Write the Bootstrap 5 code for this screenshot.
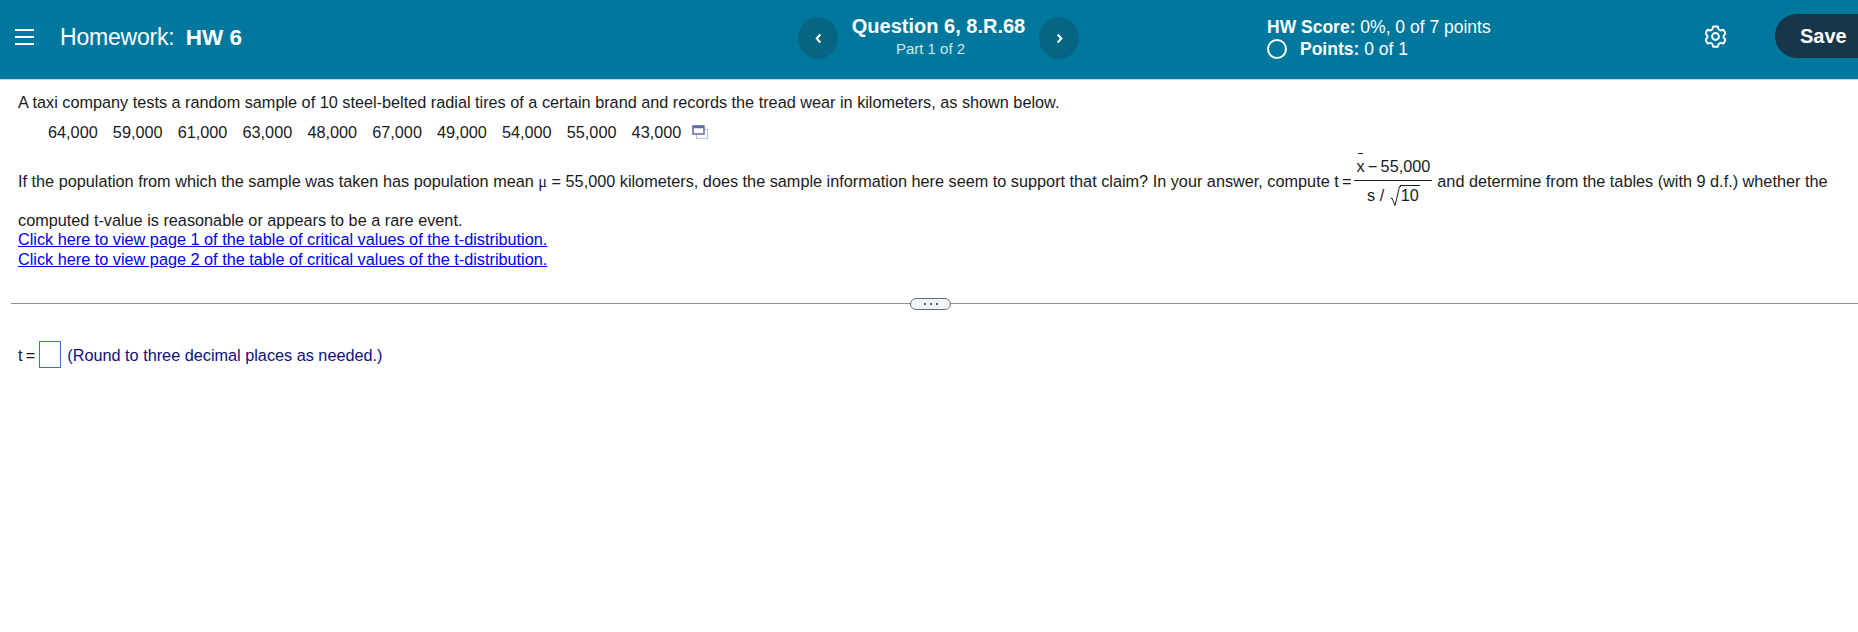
<!DOCTYPE html>
<html lang="en">
<head>
    <meta charset="UTF-8">
    <meta name="viewport" content="width=device-width, initial-scale=1.0">
    <title>Homework: HW 6</title>
    <link href="https://cdn.jsdelivr.net/npm/bootstrap@5.3.0/dist/css/bootstrap.min.css" rel="stylesheet">
    <style>
        body {
            font-family: "Liberation Sans", Arial, sans-serif;
            font-size: 16.25px;
            line-height: 20px;
            color: #1a1a1a;
            background: #fff;
            overflow: hidden;
        }
        .hw-top {
            height: 80px;
            background: #00789e;
            border-bottom: 1px solid #c3d9e6;
            color: #fff;
            white-space: nowrap;
        }
        .hw-left { width: 798px; padding-left: 15px; padding-bottom: 5px; }
        .hw-title { font-size: 23px; margin-left: 26px; letter-spacing: -.2px; }
        .hw-title b { margin-left: 5px; letter-spacing: 0; font-size: 22.5px; }
        .hw-arrow {
            width: 40px;
            height: 42px;
            border: 0;
            padding: 0;
            border-radius: 50%;
            background: #076584;
            margin-bottom: 3px;
        }
        .hw-mid { width: 201px; text-align: center; padding-bottom: 5px; }
        .hw-mid-title { font-size: 20px; font-weight: 700; line-height: 23px; }
        .hw-mid-part { font-size: 15px; line-height: 21px; color: #d5e6ec; padding-right: 16px; }
        .hw-score { width: 438px; margin-left: 188px; padding-bottom: 3px; font-size: 17.5px; line-height: 22px; }
        .hw-ring {
            width: 20px;
            height: 20px;
            border: 2px solid #fff;
            border-radius: 50%;
            margin-right: 13px;
        }
        .hw-gear { width: 70px; margin-bottom: 7px; }
        .hw-save {
            width: 83px;
            height: 44px;
            margin-left: auto;
            margin-bottom: 7px;
            border: 0;
            border-radius: 22px 0 0 22px;
            background: #16364a;
            color: #fff;
            font-size: 20px;
            font-weight: 700;
            text-align: left;
            padding: 0 0 0 25px;
        }
        .hw-body { padding: 12px 18px 0; white-space: nowrap; }
        .hw-data { margin: 10px 0 0 30px; height: 20px; }
        .hw-data span { margin-right: 15.15px; }
        .hw-data svg { margin-left: -4px; }
        .hw-claim { margin-top: 13px; height: 52px; }
        .hw-serif { font-family: "Liberation Serif", serif; }
        .hw-frac { text-align: center; margin: 0 5px 0 3px; }
        .hw-frac-top { padding: 0 2px 4px; border-bottom: 1px solid #222; line-height: 20px; }
        .hw-frac-bot { padding: 3px 2px 0; line-height: 22px; }
        .hw-xbar { position: relative; }
        .hw-xbar::before {
            content: "";
            position: absolute;
            left: 2px;
            top: -4px;
            width: 5px;
            height: 1px;
            background: #222;
        }
        .hw-surd { vertical-align: -6px; margin: 0 -1px 0 1px; }
        .hw-root { border-top: 1px solid #222; line-height: 18px; padding: 0 1px; display: inline-block; }
        .hw-event { margin-top: 3px; }
        .hw-link { color: #0000ee; display: block; line-height: 19.5px; text-decoration: underline; width: fit-content; }
        .hw-split { margin: 34px -18px 0 -7px; height: 1px; background: #8b92a8; position: relative; }
        .hw-dots {
            position: absolute;
            left: 899px;
            top: -5px;
            width: 41px;
            height: 12px;
            border: 1px solid #5f7186;
            border-radius: 6px;
            background: #f2f4f7;
            gap: 4px;
        }
        .hw-dots i { width: 2px; height: 2px; background: #4e5a68; display: block; }
        .hw-answer { margin-top: 37px; color: #1a1a1a; }
        .hw-box { width: 22px; height: 27px; border: 1px solid #3b73c9; margin: 0 6px 0 4px; }
        .hw-hint { color: #10107a; }
    </style>
</head>
<body>
    <header class="hw-top d-flex align-items-center">
        <div class="hw-left d-flex align-items-center">
            <svg width="19" height="16" viewBox="0 0 19 16"><path d="M0 1h19M0 8h19M0 15h19" stroke="#fff" stroke-width="2"/></svg>
            <div class="hw-title">Homework: <b>HW 6</b></div>
        </div>
        <button class="hw-arrow d-flex align-items-center justify-content-center" aria-label="Previous">
            <svg width="7" height="11" viewBox="0 0 8 12"><path d="M6 1.5 2 6l4 4.5" fill="none" stroke="#fff" stroke-width="2.4"/></svg>
        </button>
        <div class="hw-mid">
            <div class="hw-mid-title">Question 6, 8.R.68</div>
            <div class="hw-mid-part">Part 1 of 2</div>
        </div>
        <button class="hw-arrow d-flex align-items-center justify-content-center" aria-label="Next">
            <svg width="7" height="11" viewBox="0 0 8 12"><path d="M2 1.5 6 6l-4 4.5" fill="none" stroke="#fff" stroke-width="2.4"/></svg>
        </button>
        <div class="hw-score">
            <div><b>HW Score:</b> 0%, 0 of 7 points</div>
            <div class="d-flex align-items-center"><span class="hw-ring"></span><span><b>Points:</b> 0 of 1</span></div>
        </div>
        <div class="hw-gear d-flex">
            <svg width="21" height="23" viewBox="0 0 22 24"><path d="M8.6 1.5h4.8l.9 3 2 1.2 3-.8 2.3 4-2.1 2.2v2l2.1 2.3-2.3 4-3-.8-2 1.2-.9 3H8.6l-.9-3-2-1.2-3 .8-2.3-4 2.1-2.3v-2L.4 8.9l2.3-4 3 .8 2-1.2z" fill="none" stroke="#fff" stroke-width="2" stroke-linejoin="round"/><circle cx="11" cy="12" r="3.6" fill="none" stroke="#fff" stroke-width="2"/></svg>
        </div>
        <button class="hw-save">Save</button>
    </header>

    <main class="hw-body">
        <div>A taxi company tests a random sample of 10 steel-belted radial tires of a certain brand and records the tread wear in kilometers, as shown below.</div>
        <div class="hw-data d-flex align-items-center">
            <span>64,000</span><span>59,000</span><span>61,000</span><span>63,000</span><span>48,000</span><span>67,000</span><span>49,000</span><span>54,000</span><span>55,000</span><span>43,000</span>
            <svg width="16" height="14" viewBox="0 0 16 14"><rect x="4.5" y="4.5" width="11" height="9" fill="#fff" stroke="#b9c1e2"/><rect x="1" y="1" width="11" height="8" fill="#fff" stroke="#5f6cb4" stroke-width="1.5"/><path d="M1 2h11" stroke="#5f6cb4" stroke-width="2.5"/></svg>
        </div>
        <div class="hw-claim d-flex align-items-center">
            <span>If the population from which the sample was taken has population mean <span class="hw-serif">μ</span> = 55,000 kilometers, does the sample information here seem to support that claim? In your answer, compute t&#8201;=</span>
            <span class="hw-frac d-inline-block">
                <span class="hw-frac-top d-block"><span class="hw-xbar">x</span>&#8201;−&#8201;55,000</span>
                <span class="hw-frac-bot d-block">s / <svg class="hw-surd" width="11" height="21" viewBox="0 0 11 21"><path d="M.5 13 2 12l3 7.5L9.5.5h1.5" fill="none" stroke="#222"/></svg><span class="hw-root">10</span></span>
            </span>
            <span>and determine from the tables (with 9 d.f.) whether the</span>
        </div>
        <div class="hw-event">computed t-value is reasonable or appears to be a rare event.</div>
        <a class="hw-link" href="#">Click here to view page 1 of the table of critical values of the t-distribution.</a>
        <a class="hw-link" href="#">Click here to view page 2 of the table of critical values of the t-distribution.</a>
        <div class="hw-split">
            <div class="hw-dots d-flex align-items-center justify-content-center"><i></i><i></i><i></i></div>
        </div>
        <div class="hw-answer d-flex align-items-center">
            <span>t&#8201;=</span><span class="hw-box"></span><span class="hw-hint">(Round to three decimal places as needed.)</span>
        </div>
    </main>
    <script src="https://cdn.jsdelivr.net/npm/bootstrap@5.3.0/dist/js/bootstrap.bundle.min.js"></script>
</body>
</html>
